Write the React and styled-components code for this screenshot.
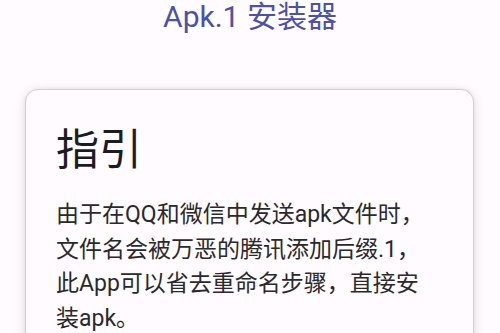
import React from 'react';
import styled, { createGlobalStyle } from 'styled-components';

const PageStyle = createGlobalStyle`
  html, body {
    margin: 0;
    padding: 0;
    background-color: #FFFBFE;
  }
  body {
    font-family: Roboto, "Noto Sans CJK SC", sans-serif;
    color: #1c1b1f;
    overflow: hidden;
  }
`;

const Screen = styled.div`
  display: flex;
  flex-direction: column;
  width: 500px;
  height: 333px;
  overflow: hidden;
`;

const Title = styled.h1`
  margin: 0;
  font-size: 30px;
  line-height: 34px;
  font-weight: 400;
  text-align: center;
  color: #4c52a6;
`;

const Card = styled.section`
  margin: 55px 26px 0 25px;
  padding: 34px 30px 24px 30px;
  border: 1px solid #d0d0d8;
  border-radius: 13px;
  background-color: #FFFBFE;
  box-shadow: 0 2px 12px rgba(0, 0, 0, 0.13), 0 0 3px rgba(0, 0, 0, 0.06);
`;

const Heading = styled.h2`
  margin: 0;
  font-size: 43px;
  line-height: 52px;
  font-weight: 400;
  color: #1c1b1f;
`;

const Body = styled.p`
  margin: 22px 0 0 0;
  max-width: 378px;
  font-size: 23px;
  line-height: 34.5px;
  color: #2a292d;
`;

const App = () => {
  return (
    <>
      <PageStyle />
      <Screen>
        <Title>Apk.1 安装器</Title>
        <Card>
          <Heading>指引</Heading>
          <Body>
            由于在QQ和微信中发送apk文件时，文件名会被万恶的腾讯添加后缀.1，此App可以省去重命名步骤，直接安装apk。
          </Body>
        </Card>
      </Screen>
    </>
  );
};

export default App;
